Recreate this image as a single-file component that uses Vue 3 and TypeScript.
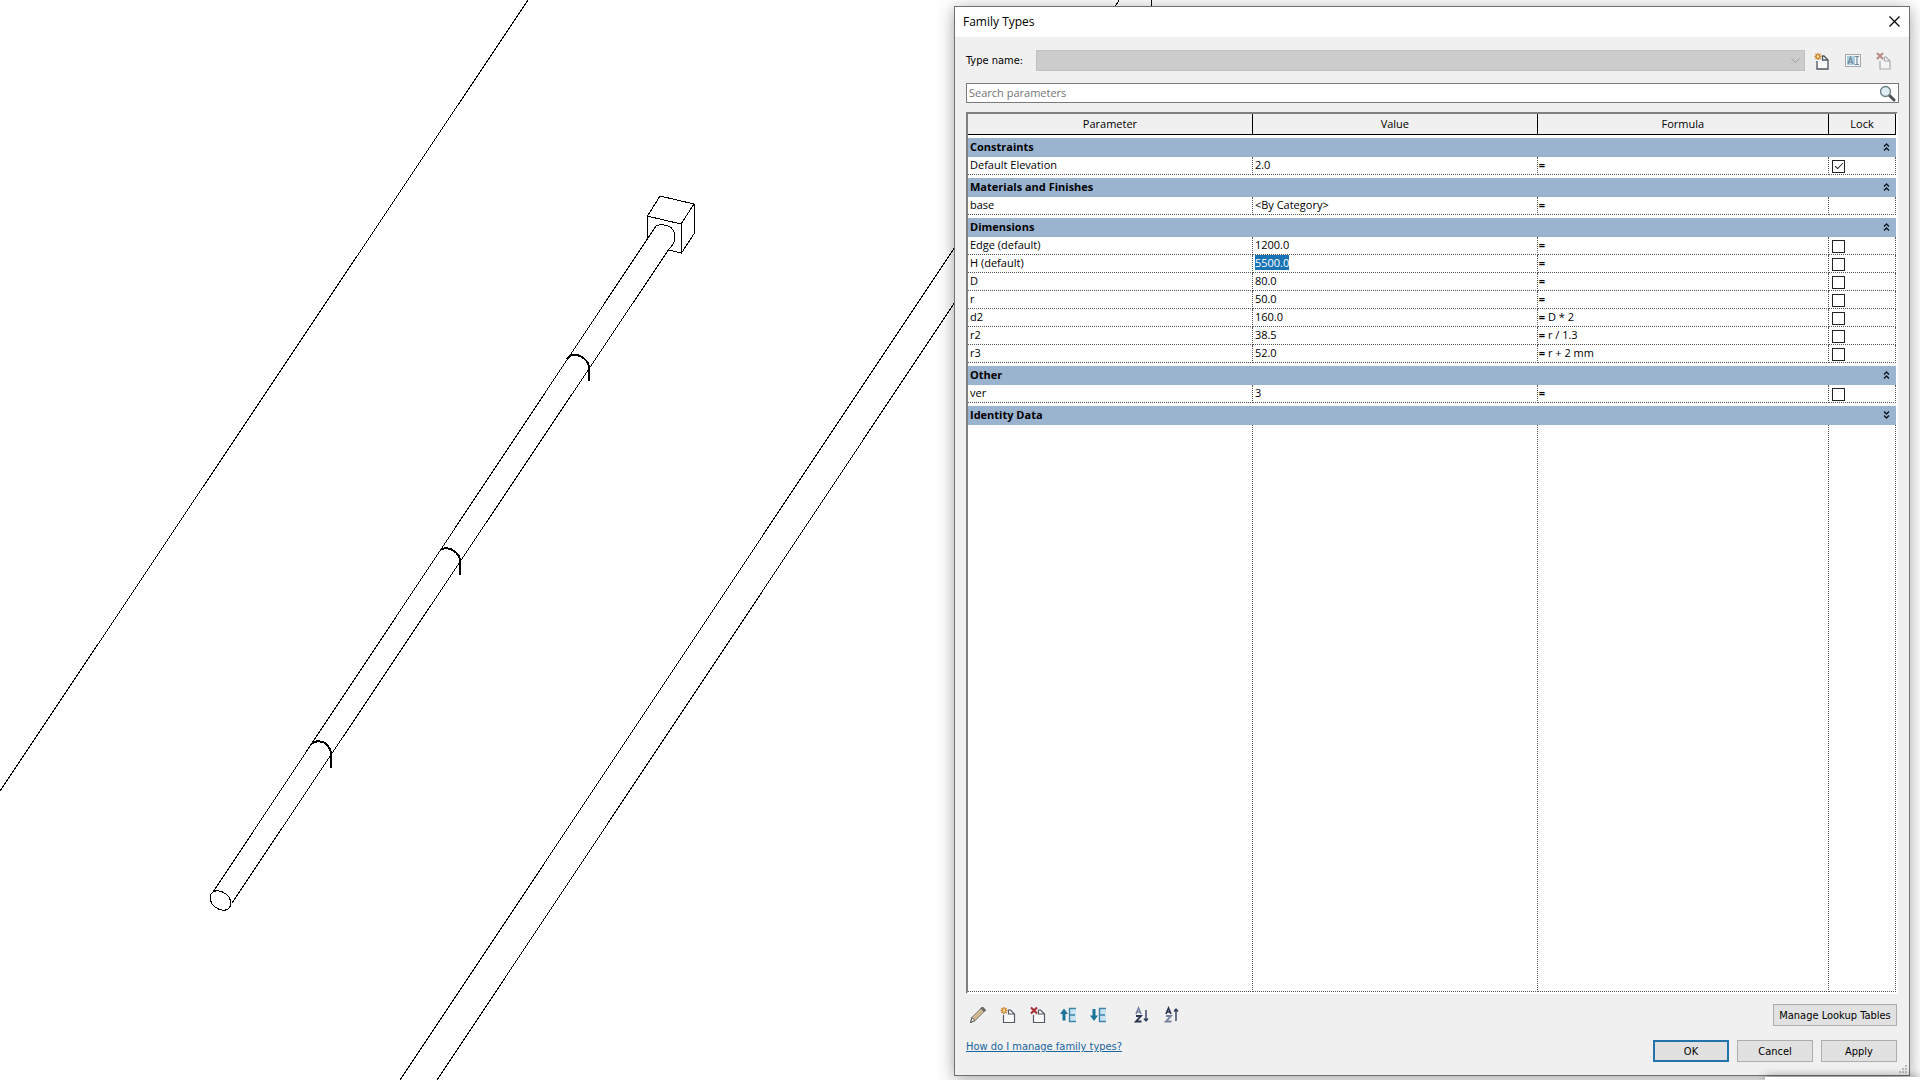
<script setup lang="ts">
import { computed, onMounted, ref } from 'vue'

type LockState = 'on' | 'off' | 'none'

interface Parameter {
  name: string
  value: string
  formula: string
  lock: LockState
  editing?: boolean
}

interface Group {
  title: string
  open: boolean
  rows: Parameter[]
}

const row = (name: string, value: string, formula = '', lock: LockState = 'off'): Parameter => ({
  name,
  value,
  formula,
  lock,
})

const groups = ref<Group[]>([
  { title: 'Constraints', open: true, rows: [row('Default Elevation', '2.0', '', 'on')] },
  { title: 'Materials and Finishes', open: true, rows: [row('base', '<By Category>', '', 'none')] },
  {
    title: 'Dimensions',
    open: true,
    rows: [
      row('Edge (default)', '1200.0'),
      { ...row('H (default)', '5500.0'), editing: true },
      row('D', '80.0'),
      row('r', '50.0'),
      row('d2', '160.0', 'D * 2'),
      row('r2', '38.5', 'r / 1.3'),
      row('r3', '52.0', 'r + 2 mm'),
    ],
  },
  { title: 'Other', open: true, rows: [row('ver', '3')] },
  { title: 'Identity Data', open: false, rows: [] },
])

const search = ref('')
const needle = computed(() => search.value.trim().toLowerCase())
const visibleRows = (group: Group): Parameter[] =>
  group.open ? group.rows.filter((p) => p.name.toLowerCase().includes(needle.value)) : []

const grid = ref<HTMLTableElement | null>(null)
onMounted(() => {
  const cell = grid.value?.querySelector<HTMLInputElement>('.cell-input')
  cell?.focus()
  cell?.select()
})
</script>

<template>
  <main class="desktop">
    <svg class="model" viewBox="0 0 1920 1080" preserveAspectRatio="xMinYMin slice" aria-label="3D view">
      <g class="edges">
        <path d="M0 791 528 0M1115 7l4-7M1151.500 0v7M400 1080 955 247M437 1080 955 302" />
        <path d="M213 892 656 226M232 903 669 249" />
        <path d="M656 226c4-2 9-1 12 0 5 2 7 7 7 11s-2 8-6 12" />
        <path d="M647.500 239v-23L660 196l34 8-13 20-34-8M694.500 204v29l-13 20v-29M669 250l12 3" />
        <ellipse cx="220.500" cy="900.500" rx="11.500" ry="8.500" transform="rotate(38 220.500 900.500)" />
      </g>
      <g class="clamps">
        <path d="M567 359c3-5 8-5 13-3 6 3 9 8 9 12v13" />
        <path d="M441 550c3-3 9-2 13 1 5 3 6 7 6 11v13" />
        <path d="M312 744c3-4 9-3 13-1 5 4 6 8 6 12v13" />
      </g>
    </svg>

    <section class="dialog" role="dialog" aria-labelledby="dialog-title">
      <header class="titlebar">
        <h1 id="dialog-title">Family Types</h1>
        <button class="close" type="button" aria-label="Close">
          <svg width="11" height="11" viewBox="0 0 11 11"><path d="M.5.500l10 10M10.500.500l-10 10" fill="none" stroke="#000" stroke-width="1.200" /></svg>
        </button>
      </header>

      <div class="body">
        <div class="type-row">
          <label for="type-name">Type name:</label>
          <div class="select-wrap">
            <select id="type-name" disabled></select>
            <svg width="9" height="6" viewBox="0 0 9 6"><path d="M.5.500l4 4 4-4" fill="none" stroke="#9d9d9d" /></svg>
          </div>
          <div class="type-actions">
            <button class="tool" type="button" aria-label="New type">
              <svg width="16" height="18" viewBox="0 0 16 18">
                <path d="M3 9v8h11V8l-4-4H8.500v4H14" fill="#fafafa" stroke="#4c5560" stroke-width="1.300" />
                <path d="M4 1v7M.5 4.500h7M1.500 2l5 5M6.500 2l-5 5" stroke="#c9822b" stroke-width="1.400" />
                <circle cx="4" cy="4.500" r="1.200" fill="#ffe9a8" />
              </svg>
            </button>
            <button class="tool" type="button" aria-label="Rename type" disabled>
              <svg width="18" height="16" viewBox="0 0 18 16">
                <rect x="1.500" y="1.500" width="15" height="12" fill="#f6f6f6" stroke="#a2a8ad" />
                <path d="M3 3h8v9H3z" fill="#a9d0e2" />
                <path d="M4 11l2.500-7L9 11M5 9h3M11 3.500h4M13 3.500v8M11 11.500h4" fill="none" stroke="#74889a" stroke-width="1.200" />
              </svg>
            </button>
            <button class="tool" type="button" aria-label="Delete type" disabled>
              <svg width="16" height="18" viewBox="0 0 16 18">
                <path d="M4 9v8h10V9l-4-4H8.500v4H14" fill="#f4f4f4" stroke="#a9a9ad" stroke-width="1.200" />
                <path d="M1 1l6 6M7 1L1 7" stroke="#bd8587" stroke-width="2" />
              </svg>
            </button>
          </div>
        </div>

        <div class="search">
          <input v-model="search" type="text" placeholder="Search parameters" aria-label="Search parameters" />
          <button type="button" aria-label="Search">
            <svg width="17" height="17" viewBox="0 0 17 17">
              <path d="M10 10l5 5" stroke="#4b5154" stroke-width="3" stroke-linecap="round" />
              <circle cx="6.500" cy="6.500" r="5" fill="#dceef1" stroke="#6a7d82" stroke-width="1.300" />
            </svg>
          </button>
        </div>

        <div class="grid-frame">
          <table ref="grid">
            <colgroup>
              <col class="c-name" />
              <col class="c-value" />
              <col class="c-formula" />
              <col class="c-lock" />
            </colgroup>
            <thead>
              <tr>
                <th scope="col">Parameter</th>
                <th scope="col">Value</th>
                <th scope="col">Formula</th>
                <th scope="col">Lock</th>
              </tr>
            </thead>
            <tbody>
              <template v-for="group in groups" :key="group.title">
                <tr class="group">
                  <th colspan="4" scope="rowgroup">
                    <div class="group-bar">
                      <span>{{ group.title }}</span>
                      <button type="button" :aria-label="'Toggle ' + group.title" @click="group.open = !group.open">
                        <svg width="7" height="8" viewBox="0 0 7 8">
                          <path
                            :d="group.open ? 'M1 3.500 3.500 1 6 3.500M1 7.500 3.500 5 6 7.500' : 'M1 .5 3.500 3 6 .5M1 4.500 3.500 7 6 4.500'"
                            fill="none"
                            stroke="#0b1522"
                            stroke-width="1.400"
                          />
                        </svg>
                      </button>
                    </div>
                  </th>
                </tr>
                <tr v-for="p in visibleRows(group)" :key="p.name" class="param">
                  <td>{{ p.name }}</td>
                  <td>
                    <input v-if="p.editing" v-model="p.value" class="cell-input" type="text" :aria-label="p.name" />
                    <template v-else>{{ p.value }}</template>
                  </td>
                  <td class="formula"><b>=</b> {{ p.formula }}</td>
                  <td class="lock">
                    <input v-if="p.lock !== 'none'" type="checkbox" :checked="p.lock === 'on'" :aria-label="'Lock ' + p.name" />
                  </td>
                </tr>
              </template>
              <tr class="filler">
                <td></td>
                <td></td>
                <td></td>
                <td></td>
              </tr>
            </tbody>
          </table>
        </div>

        <div class="toolbar">
          <button class="tool" type="button" aria-label="Edit parameter">
            <svg width="18" height="18" viewBox="0 0 18 18">
              <path d="M1.500 16.500l1.500-5L13 1.500l3 3L6 14.500z" fill="#e6cda2" stroke="#5e5a57" />
              <path d="M12 2.500l1.500-1.500 3 3L15 5.500z" fill="#6b6b6f" stroke="#55555a" />
              <path d="M4.500 13L14 3.500" stroke="#a98f6a" />
              <path d="M1.500 16.500l1.500-5 3 3z" fill="#fff" stroke="#555" />
            </svg>
          </button>
          <button class="tool" type="button" aria-label="New parameter">
            <svg width="16" height="18" viewBox="0 0 16 18">
              <path d="M3.500 9v7.500h11V8l-4-4H8.500v4h6" fill="#fafafa" stroke="#535a66" stroke-width="1.200" />
              <path d="M4 1v7M.5 4.500h7M1.500 2l5 5M6.500 2l-5 5" stroke="#c9822b" stroke-width="1.300" />
              <circle cx="4" cy="4.500" r="1.200" fill="#ffe9a8" />
            </svg>
          </button>
          <button class="tool" type="button" aria-label="Delete parameter">
            <svg width="16" height="18" viewBox="0 0 16 18">
              <path d="M3.500 9v7.500h11V8l-4-4H8.500v4h6" fill="#fafafa" stroke="#535a66" stroke-width="1.200" />
              <path d="M1 1.500l6 6M7 1.500l-6 6" stroke="#a52c32" stroke-width="2" />
            </svg>
          </button>
          <button class="tool" type="button" aria-label="Move parameter up">
            <svg width="18" height="18" viewBox="0 0 18 18">
              <path d="M10 2h7v14h-7z" fill="#c9e2ef" />
              <path d="M17 2.500h-6.500v13H17M10.500 9H16" fill="none" stroke="#3e83a8" stroke-width="1.400" />
              <path d="M5 2.500L9 8H6.500v6.500h-3V8H1z" fill="#1c7399" />
            </svg>
          </button>
          <button class="tool" type="button" aria-label="Move parameter down">
            <svg width="18" height="18" viewBox="0 0 18 18">
              <path d="M10 2h7v14h-7z" fill="#c9e2ef" />
              <path d="M17 2.500h-6.500v13H17M10.500 9H16" fill="none" stroke="#3e83a8" stroke-width="1.400" />
              <path d="M5 15L1 9.500h2.500V3h3v6.500H9z" fill="#1c7399" />
            </svg>
          </button>
          <button class="tool sort" type="button" aria-label="Sort ascending">
            <svg width="16" height="18" viewBox="0 0 16 18">
              <path d="M2 8l2.500-6L7 8M3 6h3" fill="none" stroke="#7382a0" stroke-width="1.600" />
              <path d="M2 10h5l-5 5.500h5.500" fill="none" stroke="#2c3550" stroke-width="1.800" />
              <path d="M12 4v11M10 12.500l2 2.500 2-2.500" fill="none" stroke="#2f3f60" stroke-width="1.400" />
            </svg>
          </button>
          <button class="tool" type="button" aria-label="Sort descending">
            <svg width="16" height="18" viewBox="0 0 16 18">
              <path d="M2 8l2.500-6L7 8M3 6h3" fill="none" stroke="#2c3550" stroke-width="1.600" />
              <path d="M2 10h5l-5 5.500h5.500" fill="none" stroke="#7382a0" stroke-width="1.800" />
              <path d="M12 15V3M10 5.500L12 3l2 2.500" fill="none" stroke="#2f3f60" stroke-width="1.400" />
            </svg>
          </button>
          <button class="push lookup" type="button">Manage Lookup Tables</button>
        </div>

        <footer class="footer">
          <a href="#help">How do I manage family types?</a>
          <div class="actions">
            <button class="push primary" type="button">OK</button>
            <button class="push" type="button">Cancel</button>
            <button class="push" type="button">Apply</button>
          </div>
        </footer>
      </div>

      <svg class="grip" width="9" height="9" viewBox="0 0 9 9" fill="#bdbdbd">
        <path d="M6 0h2v2H6zM6 3h2v2H6zM6 6h2v2H6zM3 3h2v2H3zM3 6h2v2H3zM0 6h2v2H0z" />
      </svg>
    </section>

    <div class="window-behind"></div>
  </main>
</template>

<style>
body {
  margin: 0;
  background: #fff;
}
</style>

<style scoped>
.desktop {
  position: relative;
  height: 100vh;
  overflow: hidden;
  background: #fff;
  color: #000;
  font-family: 'Open Sans', 'Noto Sans', sans-serif;
  font-size: 11px;
  line-height: 15px;
}

.model {
  display: block;
  width: 100%;
  height: 100%;
}

.edges,
.clamps {
  fill: none;
  stroke: #000;
  stroke-width: 1;
  shape-rendering: crispEdges;
}

.clamps {
  stroke-width: 2;
}

.dialog {
  position: absolute;
  top: 6px;
  right: 10px;
  bottom: 4px;
  left: 954px;
  display: flex;
  flex-direction: column;
  border: 1px solid #707070;
  background: #f0f0f0;
  box-shadow: 0 3px 16px rgba(0, 0, 0, 0.36);
}

.titlebar {
  display: flex;
  align-items: center;
  justify-content: space-between;
  box-sizing: border-box;
  height: 30px;
  padding: 0 9px 2px 8px;
  background: #fff;
}

h1 {
  margin: 0;
  font-size: 12px;
  font-weight: 400;
}

button,
input,
select {
  box-sizing: border-box;
  margin: 0;
  padding: 0;
  border: 0;
  border-radius: 0;
  background: none;
  color: inherit;
  font: inherit;
}

.close {
  display: flex;
}

.body {
  display: flex;
  flex: 1;
  flex-direction: column;
  min-height: 0;
  padding: 13px 10px 13px 11px;
}

.type-row {
  display: flex;
  align-items: center;
  height: 21px;
}

label,
.push,
.footer a {
  font-family: 'DejaVu Sans Condensed', 'DejaVu Sans', sans-serif;
}

.type-row label {
  width: 70px;
}

.select-wrap {
  position: relative;
  flex: 1;
  height: 21px;
}

.select-wrap select {
  width: 100%;
  height: 100%;
  border: 1px solid #c0c0c0;
  background: #ccc;
  appearance: none;
  opacity: 1;
}

.select-wrap svg {
  position: absolute;
  top: 8px;
  right: 5px;
}

.type-actions {
  display: flex;
  gap: 7px;
  padding: 0 3px 0 5px;
}

.tool {
  display: flex;
  align-items: center;
  justify-content: center;
  width: 24px;
  height: 22px;
}

.search {
  display: flex;
  align-items: center;
  box-sizing: border-box;
  height: 20px;
  margin-top: 12px;
  padding: 0 2px;
  border: 1px solid #7a7a7a;
  background: #fff;
}

.search input {
  flex: 1;
  height: 18px;
  padding-bottom: 2px;
  outline: 0;
}

.search input::placeholder {
  color: #757575;
  opacity: 1;
}

.search button {
  display: flex;
}

.grid-frame {
  flex: 1;
  min-height: 0;
  margin: 9px 1px 0 0;
  border: solid #fff;
  border-width: 2px;
  border-top-color: #808080;
  border-left-color: #808080;
  background: #fff;
}

table {
  width: 100%;
  height: 100%;
  border-spacing: 0;
  table-layout: fixed;
}

.c-name,
.c-value {
  width: 30.7%;
}

.c-lock {
  width: 67px;
}

th,
td {
  box-sizing: border-box;
  padding: 0;
}

thead th {
  height: 21px;
  padding-bottom: 2px;
  border-right: 1px solid #000;
  border-bottom: 1px solid #000;
  background: #f0f0f0;
  font-weight: 400;
}

.group {
  height: 22px;
}

.group th {
  height: 22px;
  border-top: 3px solid #fff;
  background: #9ab3cf;
  background-clip: padding-box;
  text-align: left;
}

.group-bar {
  display: flex;
  align-items: center;
  justify-content: space-between;
  box-sizing: border-box;
  height: 19px;
  padding: 0 6px 2px 2px;
}

.group-bar button {
  display: flex;
}

.param,
.param td {
  height: 18px;
}

td {
  padding: 0 2px;
  border-right: 1px dotted #555;
  border-bottom: 1px dotted #555;
  vertical-align: top;
  white-space: nowrap;
}

.formula {
  padding: 0 1px;
}

.cell-input {
  display: block;
  width: 100%;
  height: 15px;
  outline: 0;
}

.cell-input::selection {
  background: #1874b4;
  color: #fff;
}

.lock {
  padding: 3px 3px 0;
}

.lock input {
  display: block;
  width: 13px;
  height: 13px;
  border: 1px solid #222;
  background: #fff;
  appearance: none;
}

.lock input:checked::before {
  display: block;
  width: 7px;
  height: 3px;
  margin: 2px 0 0 2px;
  border: solid #222;
  border-width: 0 0 1px 1px;
  content: '';
  transform: rotate(-45deg);
}

.toolbar {
  display: flex;
  gap: 6px;
  height: 22px;
  margin-top: 10px;
}

.sort {
  margin-left: 14px;
}

.push {
  width: 76px;
  height: 22px;
  border: 1px solid #adadad;
  background: #e1e1e1;
}

.primary {
  border: 2px solid #2474ac;
}

.lookup {
  width: 124px;
  margin: 0 2px 0 auto;
}

.footer {
  display: flex;
  align-items: flex-start;
  justify-content: space-between;
  height: 22px;
  margin-top: 14px;
}

.footer a {
  line-height: 13px;
  color: #1a659c;
}

.actions {
  display: flex;
  gap: 8px;
  padding-right: 2px;
}

.grip {
  position: absolute;
  right: 1px;
  bottom: 1px;
}

.window-behind {
  position: absolute;
  right: 0;
  bottom: 0;
  left: 1765px;
  height: 3px;
  background: #fff;
  box-shadow: 0 0 8px rgba(0, 0, 0, 0.7);
}
</style>
